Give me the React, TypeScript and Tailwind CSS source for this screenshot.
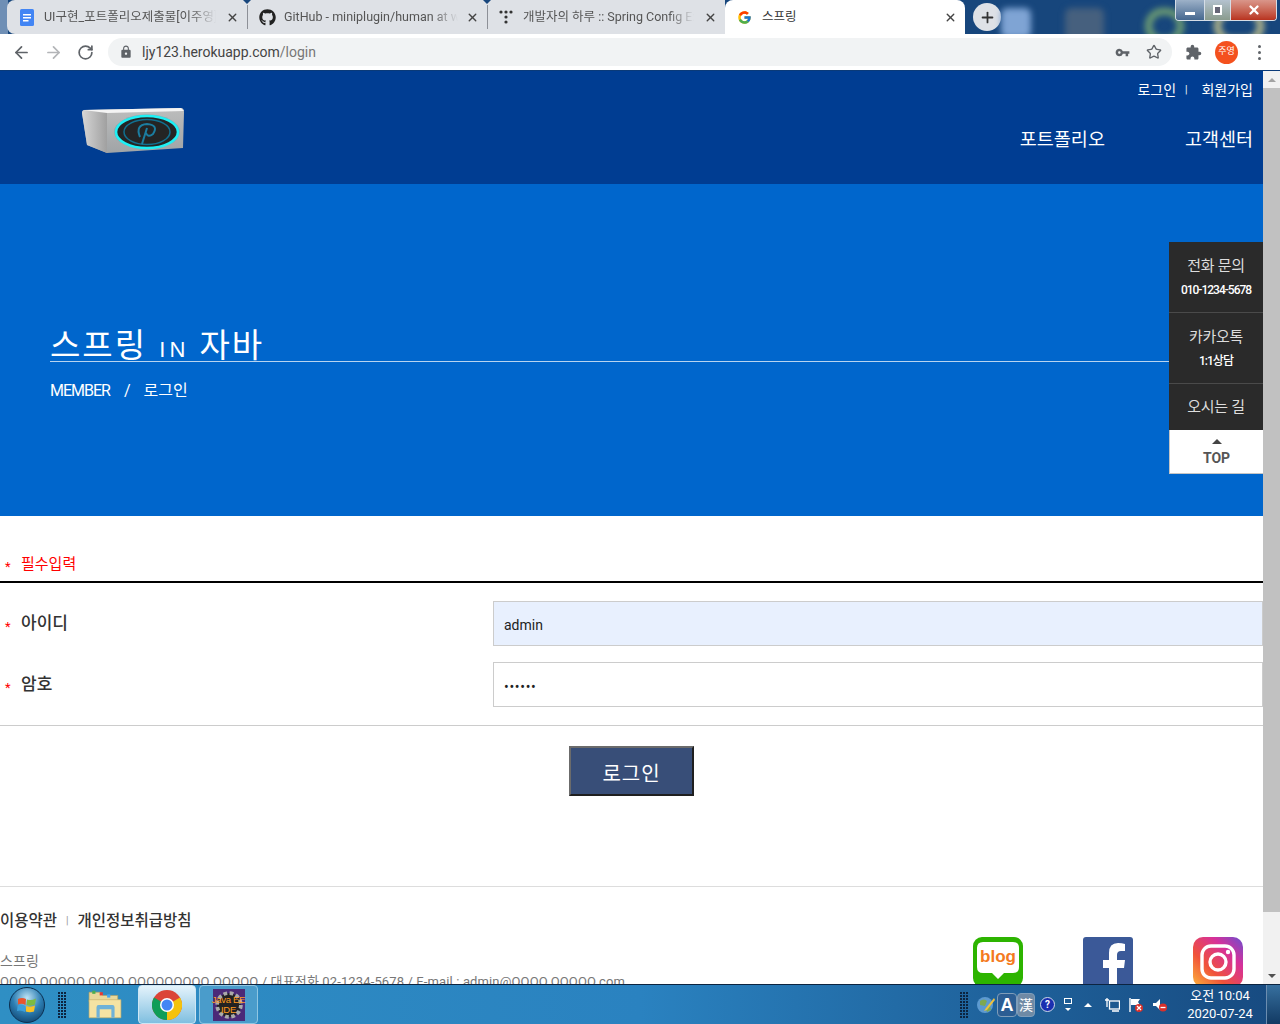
import { ArrowLeft, ArrowRight, RotateCw, Star, Plus, X } from "lucide-react"
import { FaGithub } from "react-icons/fa"
import { FcGoogle } from "react-icons/fc"
import { MdExtension, MdLock, MdVpnKey } from "react-icons/md"

const FONT = "font-['Roboto','Noto_Sans_CJK_KR',sans-serif]"

const DocsIcon = () => (
  <svg width="14" height="17" viewBox="0 0 14 17" className="shrink-0">
    <rect width="14" height="17" rx="1.5" fill="#4285f4" />
    <path d="M3 5h8v1.5H3zM3 8h8v1.5H3zM3 11h5.5v1.5H3z" fill="#fff" />
  </svg>
)

const TistoryIcon = () => (
  <svg width="14" height="14" viewBox="0 0 14 14" className="shrink-0" fill="#333">
    <circle cx="2" cy="2" r="1.6" />
    <circle cx="7" cy="2" r="1.6" />
    <circle cx="12" cy="2" r="1.6" />
    <circle cx="7" cy="7" r="1.6" />
    <circle cx="7" cy="12" r="1.6" />
  </svg>
)

const Tab = ({ icon, title, width, gap }: { icon: React.ReactNode; title: string; width: string; gap: string }) => (
  <div className={`${width} h-full flex items-center pl-[11px] pr-2 ${gap}`}>
    {icon}
    <span className="flex-1 text-[12.5px] text-[#555] whitespace-nowrap overflow-hidden [mask-image:linear-gradient(to_right,black_85%,transparent)]">
      {title}
    </span>
    <X size={13} strokeWidth={2.5} className="text-[#444] shrink-0" />
  </div>
)

const TabDivider = () => (
  <div className="w-[1px] h-full relative flex items-center">
    <div className="w-[1px] h-[24px] bg-[#8d9097]" />
    <div className="absolute -left-[4px] top-0 w-0 h-0 border-x-[4.5px] border-x-transparent border-t-[4px] border-t-[#17467c]" />
  </div>
)

const TabStrip = () => (
  <div className="h-[34px] flex bg-[#17467c] relative overflow-hidden">
    <div className="absolute left-0 top-0 w-[8px] h-full bg-[#6f8fb5]" />
    <div className="ml-[7px] w-[718px] h-full flex bg-[#dee1e6] rounded-tl-lg rounded-bl-lg relative">
      <div className="w-[240px] h-full flex items-center pl-[13px] pr-2 gap-[10px]">
        <DocsIcon />
        <span className="flex-1 text-[12.5px] text-[#555] whitespace-nowrap overflow-hidden [mask-image:linear-gradient(to_right,black_85%,transparent)]">
          UI구현_포트폴리오제출물[이주영]
        </span>
        <X size={13} strokeWidth={2.5} className="text-[#444] shrink-0" />
      </div>
      <TabDivider />
      <Tab width="w-[239px]" gap="gap-[8px]" icon={<FaGithub size={17} className="text-[#222] shrink-0" />} title="GitHub - miniplugin/human at work" />
      <TabDivider />
      <Tab width="w-[237px]" gap="gap-[10px]" icon={<TistoryIcon />} title="개발자의 하루 :: Spring Config Ex" />
    </div>
    <div className="w-[240px] h-full bg-white rounded-t-lg flex items-center pl-3 pr-2 gap-[10px] relative">
      <FcGoogle size={15} className="shrink-0" />
      <span className="flex-1 text-[12.5px] text-[#333]">스프링</span>
      <X size={13} strokeWidth={2.5} className="text-[#444] shrink-0" />
    </div>
    <div className="ml-2 mt-[3px] w-[28px] h-[28px] rounded-full bg-[#dee1e6] flex items-center justify-center shrink-0">
      <Plus size={17} strokeWidth={2.5} className="text-[#333]" />
    </div>
    {/* blurred desktop icons behind the window */}
    <div className="flex-1 flex items-start pt-[8px] blur-[3px]">
      <div className="w-[30px] h-[30px] rounded-md bg-[#7fa4d4]" />
      <div className="ml-[34px] w-[39px] h-[34px] rounded-md bg-[#46607e]" />
      <div className="ml-[41px] w-[39px] h-[36px] rounded-full border-[7px] border-[#6f9e73]" />
      <div className="ml-[30px] w-[50px] h-[36px] rounded-full border-[7px] border-[#b8b98b]" />
    </div>
    <div className="absolute right-[3px] top-0 w-[102px] h-[21px] flex border border-t-0 border-[#d5dde6] rounded-b-[4px] overflow-hidden">
      <div className="w-[29px] bg-gradient-to-b from-[#9db1c8] to-[#46688f] flex items-end justify-center pb-[5px] border-r border-[#d5dde6]">
        <div className="w-[10px] h-[3px] bg-white" />
      </div>
      <div className="w-[26px] bg-gradient-to-b from-[#b4c2cf] to-[#8a9b8d] flex items-center justify-center border-r border-[#d5dde6]">
        <div className="w-[9px] h-[10px] border-2 border-white bg-[#667]" />
      </div>
      <div className="flex-1 bg-gradient-to-b from-[#d9968a] to-[#b8321e] flex items-center justify-center">
        <X size={14} strokeWidth={4} className="text-white" />
      </div>
    </div>
  </div>
)

const Toolbar = () => (
  <div className="h-[37px] bg-white border-b border-[#0a3a78] flex items-center pl-[12px]">
    <ArrowLeft size={19} strokeWidth={2.2} className="text-[#5f6368]" />
    <ArrowRight size={19} strokeWidth={2.2} className="ml-[13px] text-[#b3b5b8]" />
    <RotateCw size={17} strokeWidth={2.4} className="ml-[14px] text-[#5f6368]" />
    <div className="ml-[14px] w-[1064px] h-[28px] rounded-full bg-[#f1f3f4] flex items-center pl-[11px] pr-[10px]">
      <MdLock size={14} className="text-[#5f6368]" />
      <span className="ml-[9px] flex-1 text-sm text-[#444]">
        ljy123.herokuapp.com<span className="text-[#777]">/login</span>
      </span>
      <MdVpnKey size={15} className="text-[#5f6368]" />
      <Star size={16} strokeWidth={2} className="ml-[16px] text-[#5f6368]" />
    </div>
    <MdExtension size={17} className="ml-[13px] text-[#5f6368]" />
    <div className="ml-[13px] w-[23px] h-[23px] rounded-full bg-[#f4511e] text-white text-[9px] flex items-center justify-center">
      주영
    </div>
    <div className="ml-[20px] flex flex-col gap-[3px]">
      <div className="w-[3px] h-[3px] rounded-full bg-[#5f6368]" />
      <div className="w-[3px] h-[3px] rounded-full bg-[#5f6368]" />
      <div className="w-[3px] h-[3px] rounded-full bg-[#5f6368]" />
    </div>
  </div>
)

const Logo = () => (
  <svg width="104" height="48" viewBox="0 0 104 48">
    <defs>
      <linearGradient id="logoSide" x1="0" x2="1" y1="0" y2="0">
        <stop offset="0" stopColor="#d6d6d6" />
        <stop offset="1" stopColor="#a0a0a0" />
      </linearGradient>
      <linearGradient id="logoFront" x1="0" x2="0" y1="0" y2="1">
        <stop offset="0" stopColor="#bdbdbd" />
        <stop offset="1" stopColor="#a0a4a6" />
      </linearGradient>
    </defs>
    <path d="M1 6 Q1 3 4 3 L100 1 Q103 1 103 5 L102 41 L26 46 L6 38 Z" fill="url(#logoFront)" />
    <path d="M1 6 Q1 3 4 3 L26 5 L26 46 L6 38 Z" fill="url(#logoSide)" />
    <path d="M2 3 L100 1 L103 4 L26 6 Z" fill="#f4f4f4" />
    <ellipse cx="66" cy="25" rx="33" ry="17.5" fill="#8aa9ae" />
    <ellipse cx="66" cy="25" rx="31" ry="16" fill="#242424" stroke="#1ff0f5" strokeWidth="2.6" />
    <ellipse cx="66" cy="25" rx="23" ry="12.5" fill="none" stroke="#116f8f" strokeWidth="1.5" />
    <path d="M59 30 Q54 18 66 17 Q78 18 72 27 Q67 31 65 26 M66 21 L61 37" fill="none" stroke="#1b7da0" strokeWidth="2" />
  </svg>
)

const SideButton = ({ title, sub }: { title: string; sub?: string }) => (
  <div className="h-[71px] flex flex-col items-center pt-[14px] gap-[6px] border-b border-[#4a4a4a] text-white">
    <span className="text-[15px] leading-5 text-[#ddd] tracking-[-0.3px]">{title}</span>
    {sub && <span className="text-xs leading-4 font-medium tracking-[-1px]">{sub}</span>}
  </div>
)

const SideMenu = () => (
  <div className="absolute right-0 top-[171px] w-[94px] z-10">
    <div className="bg-[#2a2a2a]">
      <SideButton title="전화 문의" sub="010-1234-5678" />
      <SideButton title="카카오톡" sub="1:1상담" />
      <div className="h-[46px] flex items-center justify-center text-[15px] text-[#ddd] tracking-[-0.3px]">오시는 길</div>
    </div>
    <div className="h-[44px] bg-white border-l border-b border-[#c5c5c5] flex flex-col items-center pt-[9px]">
      <div className="w-0 h-0 border-x-[5px] border-x-transparent border-b-[5px] border-b-[#444]" />
      <span className="text-sm leading-4 mt-[6px] font-bold text-[#555]">TOP</span>
    </div>
  </div>
)

const Header = () => (
  <header className="h-[113px] bg-[#003d92] text-white pl-[81px] pr-[10px] flex justify-between">
    <div className="pt-[36px]">
      <Logo />
    </div>
    <div className="flex flex-col items-end">
      <div className="mt-[10px] flex items-center text-sm leading-[18px]">
        <span>로그인</span>
        <span className="mx-[9px] text-[10px]">|</span>
        <span className="ml-[5px]">회원가입</span>
      </div>
      <nav className="mt-[28px] flex gap-[80px] text-[18.5px] leading-[26px]">
        <span>포트폴리오</span>
        <span>고객센터</span>
      </nav>
    </div>
  </header>
)

const Hero = () => (
  <section className="h-[332px] bg-[#0066cc] text-white pt-[141px] pl-[50px]">
    <h1 className="h-[37px] border-b border-[#b8d4f0] text-[33px] leading-[42px] tracking-[2px] whitespace-nowrap">
      스프링 <span className="ml-[2px] text-[22px] tracking-[4px] font-['Liberation_Sans',sans-serif]">IN</span> 자바
    </h1>
    <div className="mt-[17px] flex items-center text-base leading-6 tracking-[-1px]">
      <span>MEMBER</span>
      <span className="mx-[14px]">/</span>
      <span className="tracking-normal">로그인</span>
    </div>
  </section>
)

const Field = ({ label, value, filled }: { label: string; value: string; filled?: boolean }) => (
  <div className="flex items-center h-[45px]">
    <span className="w-[21px] pl-[5px] text-[13px] leading-5 text-[#f00] pt-[6px]">*</span>
    <label className="w-[472px] pt-[1px] text-[17px] font-medium text-[#333]">{label}</label>
    <input
      readOnly
      type={filled ? "text" : "password"}
      value={value}
      className={`flex-1 h-[45px] min-w-0 border border-[#ccc] px-[10px] text-sm text-[#222] outline-none ${filled ? "bg-[#e8f0fe] pt-[2px]" : "bg-white pt-[4px] tracking-[0.7px]"}`}
    />
  </div>
)

const LoginForm = () => (
  <section className="bg-white">
    <div className="h-[67px] pt-[30px] flex items-center text-[#f00] border-b-2 border-black">
      <span className="w-[21px] pl-[5px] text-[13px] pt-[6px]">*</span>
      <span className="text-[15px] leading-5">필수입력</span>
    </div>
    <div className="pt-[18px] pb-[18px] flex flex-col gap-[16px] border-b border-[#ccc]">
      <Field label="아이디" value="admin" filled />
      <Field label="암호" value="123456" />
    </div>
    <div className="pt-[20px] pb-[90px] flex justify-center">
      <button className="w-[125px] h-[50px] pt-[6px] bg-[#384e78] border-2 border-t-[#6b6b6b] border-l-[#6b6b6b] border-r-[#1f1f1f] border-b-[#1f1f1f] text-white text-xl tracking-[1px]">
        로그인
      </button>
    </div>
  </section>
)

const BlogIcon = () => (
  <svg width="50" height="50" viewBox="0 0 50 50">
    <rect width="50" height="50" rx="9" fill="#2db400" />
    <path d="M10 5 H40 Q46 5 46 11 V30 Q46 36 40 36 H31 L25 42 L19 36 H10 Q4 36 4 30 V11 Q4 5 10 5 Z" fill="#fff" />
    <text x="25" y="25" textAnchor="middle" fontSize="17" fontWeight="700" fill="#f47a20" fontFamily="'Liberation Sans',sans-serif">
      blog
    </text>
  </svg>
)

const FacebookIcon = () => (
  <svg width="50" height="50" viewBox="0 0 50 50">
    <rect width="50" height="50" rx="3" fill="#3b5998" />
    <path d="M34 50 V31 H41 L42 23 H34 V18 Q34 14 38 14 H42 V7 Q39 6 35 6 Q26 6 26 16 V23 H20 V31 H26 V50 Z" fill="#fff" />
  </svg>
)

const InstagramIcon = () => (
  <svg width="50" height="50" viewBox="0 0 50 50">
    <defs>
      <linearGradient id="insta" x1="0" y1="1" x2="1" y2="0">
        <stop offset="0" stopColor="#fdb53b" />
        <stop offset="0.35" stopColor="#f0523a" />
        <stop offset="0.7" stopColor="#d6309a" />
        <stop offset="1" stopColor="#6a4fd0" />
      </linearGradient>
    </defs>
    <rect width="50" height="50" rx="10" fill="url(#insta)" />
    <rect x="9" y="9" width="32" height="32" rx="9" fill="none" stroke="#fff" strokeWidth="3.4" />
    <circle cx="25" cy="25" r="8" fill="none" stroke="#fff" strokeWidth="3.4" />
    <circle cx="35" cy="15" r="2.2" fill="#fff" />
  </svg>
)

const Footer = () => (
  <footer className="bg-white border-t border-[#ddd] pt-[24px] flex-1 min-h-0 relative">
    <div className="flex items-center text-[15.5px] font-medium leading-5 text-[#333]">
      <span>이용약관</span>
      <span className="mx-[9px] text-[10px] text-[#999]">|</span>
      <span>개인정보취급방침</span>
    </div>
    <div className="mt-[20px] flex">
      <div className="w-[973px] text-[13px] leading-[21px] tracking-[0.13px] text-[#777] whitespace-nowrap">
        <p className="text-sm leading-5">스프링</p>
        <p>OOOO OOOOO OOOO OOOOOOOOO OOOOO / 대표전화 02-1234-5678 / E-mail : admin@OOOO.OOOOO.com</p>
      </div>
      <div className="flex gap-[60px] -mt-[14px]">
        <BlogIcon />
        <FacebookIcon />
        <InstagramIcon />
      </div>
    </div>
  </footer>
)

const Scrollbar = () => (
  <div className="w-[17px] bg-[#f1f1f1] flex flex-col items-center">
    <div className="h-[17px] flex items-center justify-center">
      <div className="w-0 h-0 border-x-[4px] border-x-transparent border-b-[4px] border-b-[#a3a3a3]" />
    </div>
    <div className="w-full h-[824px] bg-[#c1c1c1]" />
    <div className="flex-1 flex items-end pb-[6px]">
      <div className="w-0 h-0 border-x-[4px] border-x-transparent border-t-[4px] border-t-[#505050]" />
    </div>
  </div>
)

const ChromeIcon = () => (
  <svg width="30" height="30" viewBox="0 0 30 30">
    <circle cx="15" cy="15" r="15" fill="#db4437" />
    <path d="M15 15 L28 7.5 A15 15 0 0 1 15 30 Z" fill="#f4c20d" />
    <path d="M15 15 L15 30 A15 15 0 0 1 2 7.5 Z" fill="#0f9d58" />
    <circle cx="15" cy="15" r="7" fill="#fff" />
    <circle cx="15" cy="15" r="5.5" fill="#4285f4" />
  </svg>
)

const StartOrb = () => (
  <svg width="36" height="38" viewBox="0 0 36 38">
    <defs>
      <radialGradient id="orb" cx="0.5" cy="0.3" r="0.8">
        <stop offset="0" stopColor="#bfe4f5" />
        <stop offset="0.5" stopColor="#2d7fb4" />
        <stop offset="1" stopColor="#0b3a63" />
      </radialGradient>
    </defs>
    <circle cx="18" cy="19" r="17.5" fill="url(#orb)" stroke="#0c2f50" />
    <path d="M9 13 Q13 11 17 13 L16.5 19 Q13 17 9 18.5 Z" fill="#e8552d" />
    <path d="M18 13.5 Q22 15 27 12.5 L26 18.5 Q22 20.5 17.5 19 Z" fill="#7cbb42" />
    <path d="M8.7 19.5 Q13 18 16.3 20 L16 26 Q12 23.5 8 25 Z" fill="#3b9fdb" />
    <path d="M17.2 20 Q22 21.5 26 19.5 L25 25.5 Q21 27 16.8 25.5 Z" fill="#f7c226" />
  </svg>
)

const FolderIcon = () => (
  <svg width="34" height="32" viewBox="0 0 32 30">
    <path d="M1 3 H12 L14 6 H28 V12 H1 Z" fill="#e9d89a" stroke="#b79f5a" strokeWidth="0.6" />
    <rect x="4" y="1.5" width="3" height="3" fill="#4caf50" />
    <rect x="11" y="3" width="3" height="3" fill="#e53935" />
    <rect x="18" y="5" width="3" height="3" fill="#42a5f5" />
    <path d="M1 10 H31 V27 H1 Z" fill="#f5e3a3" stroke="#c6ae68" strokeWidth="0.6" />
    <path d="M8 27 V17 Q8 15 10 15 H23 Q25 15 25 17 V27 H22 V19 H11 V27 Z" fill="#6fb2d8" />
  </svg>
)

const JavaIcon = () => (
  <div className="w-[32px] h-[32px] bg-[#4b2a78] relative flex items-center justify-center text-center text-[9.5px] leading-[10px] whitespace-nowrap tracking-[-0.3px] font-['Liberation_Sans',sans-serif] text-[#ff9a1f]">
    <svg width="30" height="30" viewBox="0 0 24 24" className="absolute inset-[1px]">
      <circle cx="12" cy="12" r="9.5" fill="#222" stroke="#aaa" strokeWidth="3" strokeDasharray="3 2" />
    </svg>
    <span className="relative">
      Java EE
      <br />
      IDE
    </span>
  </div>
)

const Gripper = () => (
  <div className="grid grid-cols-3 gap-[1px] w-[8px]">
    {Array.from({ length: 27 }).map((_, i) => (
      <div key={i} className="w-[2px] h-[2px] bg-[#0c2440]" />
    ))}
  </div>
)

const Tray = () => (
  <div className="flex items-center h-full text-white">
    <Gripper />
    <svg width="18" height="18" viewBox="0 0 18 18" className="ml-[9px]">
      <circle cx="8" cy="9" r="8" fill="#5d9ad0" />
      <path d="M3 5 Q7 2 10 5 L8 10 L3 9 Z M9 13 L13 10 L14 14 L10 16 Z" fill="#7ea850" />
      <path d="M17 2 L9 12 L7 15 L10 14 L18 4 Z" fill="#f0c23c" />
    </svg>
    <div className="ml-[2px] w-[20px] h-[24px] border border-[#7f9db9] rounded-sm bg-[#2b5d93] flex items-center justify-center text-lg leading-none font-['Liberation_Sans',sans-serif] font-bold">A</div>
    <div className="w-[18px] h-[24px] border border-[#7f9db9] rounded-sm bg-[#6f8aa5] flex items-center justify-center text-sm leading-none">漢</div>
    <div className="ml-[5px] w-[15px] h-[15px] rounded-full bg-[#1a2fb0] border border-[#cfd8e8] flex items-center justify-center text-[10px] leading-none font-bold">?</div>
    <div className="ml-[9px] flex flex-col items-center gap-[4px]">
      <div className="w-[8px] h-[6px] border border-white" />
      <div className="w-0 h-0 border-x-[3px] border-x-transparent border-t-[3px] border-t-white" />
    </div>
    <div className="ml-[12px] w-0 h-0 border-x-[4px] border-x-transparent border-b-[4px] border-b-white" />
    <svg width="16" height="16" viewBox="0 0 16 16" className="ml-[12px]" fill="none" stroke="#fff" strokeWidth="1.3">
      <rect x="5.5" y="4" width="10" height="8" />
      <path d="M3 1v9M1 3h4M8 14h7" />
    </svg>
    <svg width="16" height="16" viewBox="0 0 16 16" className="ml-[8px]">
      <path d="M2 1v14" stroke="#fff" strokeWidth="1.4" />
      <path d="M3 2h9l-2 3 2 3H3z" fill="#fff" />
      <circle cx="11" cy="11" r="4" fill="#d9302a" />
      <path d="M9 9l4 4M13 9l-4 4" stroke="#fff" strokeWidth="1.2" />
    </svg>
    <svg width="16" height="16" viewBox="0 0 16 16" className="ml-[8px]">
      <path d="M1 6h3l4-4v11l-4-4H1z" fill="#fff" />
      <circle cx="11" cy="10.5" r="4" fill="#d9302a" />
      <path d="M8.5 10.5h5" stroke="#fff" strokeWidth="1.3" />
    </svg>
    <div className="ml-[14px] w-[76px] pt-[1px] text-center text-[13px] leading-[18px]">
      <div>오전 10:04</div>
      <div>2020-07-24</div>
    </div>
    <div className="ml-[8px] w-[14px] h-full border-l border-[#6c8db0] bg-gradient-to-b from-[#37709f] to-[#123a63]" />
  </div>
)

const Taskbar = () => (
  <div className="h-[40px] border-t border-[#0c2440] bg-gradient-to-r from-[#2f8fc4] via-[#2a82c0] to-[#174a80] flex items-center justify-between">
    <div className="flex items-center h-full">
      <div className="ml-[9px]"><StartOrb /></div>
      <div className="ml-[13px]"><Gripper /></div>
      <div className="ml-[22px]"><FolderIcon /></div>
      <div className="ml-[16px] w-[58px] h-full rounded-sm border border-[#cde6f4] bg-gradient-to-b from-[#e4f3fb] to-[#7fbfe0] flex items-center justify-center">
        <ChromeIcon />
      </div>
      <div className="ml-[3px] w-[59px] h-full rounded-sm border border-[#8fc6e2] bg-[#4a9ccb] flex items-center justify-center">
        <JavaIcon />
      </div>
    </div>
    <Tray />
  </div>
)

export default function App() {
  return (
    <div className={`w-[1280px] h-[1024px] flex flex-col overflow-hidden ${FONT}`}>
      <TabStrip />
      <Toolbar />
      <div className="h-[913px] flex">
        <main className="flex-1 min-w-0 relative flex flex-col overflow-hidden bg-white">
          <Header />
          <Hero />
          <LoginForm />
          <Footer />
          <SideMenu />
        </main>
        <Scrollbar />
      </div>
      <Taskbar />
    </div>
  )
}
